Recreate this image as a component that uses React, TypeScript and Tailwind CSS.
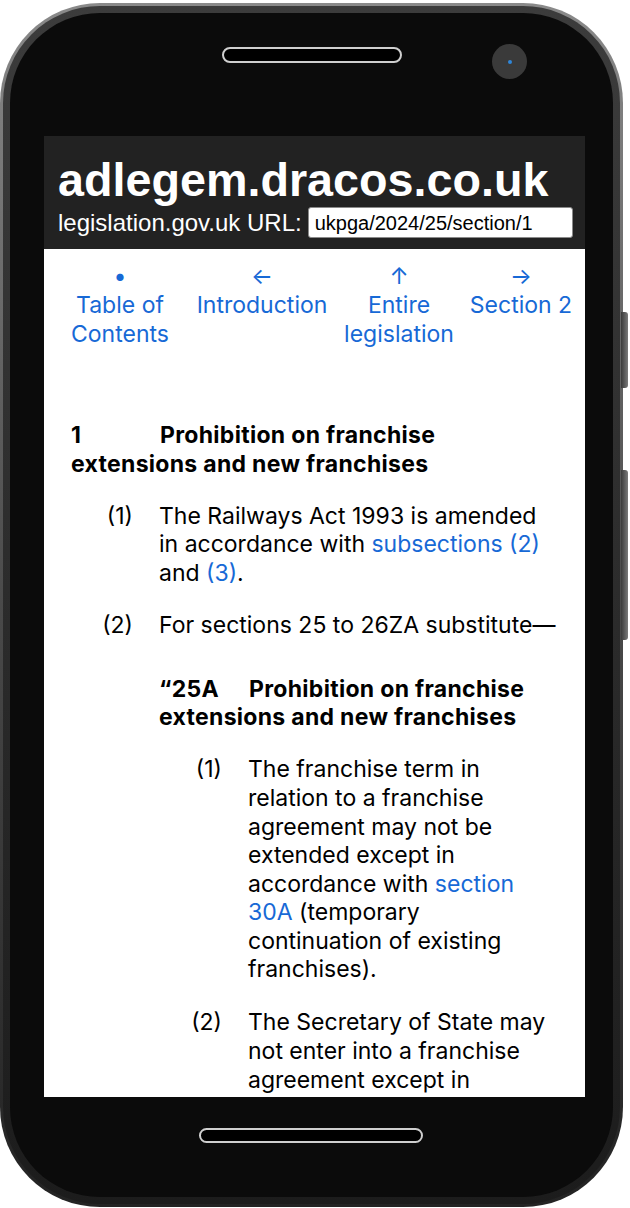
import React from "react";

const BLUE = "text-[#1769d6]";

function NavItem({ icon, lines, w }: { icon: string; lines: string[]; w: string }) {
  return (
    <div className={`${w} flex flex-col items-center text-center ${BLUE}`}>
      <span>{icon}</span>
      {lines.map((l) => (
        <span key={l} className="whitespace-nowrap">{l}</span>
      ))}
    </div>
  );
}

function Lines({ children }: { children: React.ReactNode[] }) {
  return (
    <div className="flex flex-col">
      {children.map((c, i) => (
        <span key={i} className="whitespace-nowrap">{c}</span>
      ))}
    </div>
  );
}

export default function App() {
  return (
    <div className="w-[630px] h-[1208px] bg-white overflow-hidden relative">
      {/* side buttons */}
      <div className="absolute left-[621px] top-[312px] w-[7px] h-[76px] rounded-r-[3px] bg-gradient-to-r from-[#3a3a3a] to-[#7a7a7a]" />
      <div className="absolute left-[621px] top-[470px] w-[7px] h-[170px] rounded-r-[3px] bg-gradient-to-r from-[#3a3a3a] to-[#7a7a7a]" />
      {/* phone body */}
      <div className="mt-[3px] w-[623px] h-[1204px] rounded-[100px] bg-gradient-to-b from-[#8a8a8a] via-[#4a4a4a] to-[#232323] p-[3px]">
        <div className="w-full h-full rounded-[97px] bg-gradient-to-b from-[#3c3c3c] to-[#1c1c1c] p-[7px]">
          <div className="relative w-full h-full rounded-[90px] bg-[#0b0b0b] pt-[123px] pl-[34px]">
            {/* speaker */}
            <div className="absolute left-[212px] top-[34px] w-[180px] h-[16px] rounded-full border-2 border-[#cfcfcf] bg-black" />
            {/* camera */}
            <div className="absolute left-[482px] top-[31px] w-[35px] h-[35px] rounded-full bg-[#3a3a3a] flex items-center justify-center">
              <div className="w-[4px] h-[4px] rounded-full bg-[#2f86d8]" />
            </div>
            {/* home bar */}
            <div className="absolute left-[189px] top-[1115px] w-[224px] h-[15px] rounded-full border-2 border-[#cfcfcf] bg-black" />

            {/* screen */}
            <div className="w-[541px] h-[961px] bg-white overflow-hidden">
              <div className="bg-[#222222] pt-[21px] pb-[11px] pl-[14px] text-white font-['Liberation_Sans',Arial,sans-serif]">
                <div className="text-[46.7px] leading-[46px] font-bold">adlegem.dracos.co.uk</div>
                <div className="mt-[4px] flex items-center h-[31px]">
                  <span className="text-[24px] leading-[31px]">legislation.gov.uk URL:</span>
                  <div className="ml-[6px] w-[265px] h-[31px] bg-white border border-[#8a8a8a] rounded-[3px] pl-[6px] flex items-center text-black text-[20px]">
                    ukpga/2024/25/section/1
                  </div>
                </div>
              </div>

              <div className="font-['Inter','Noto_Sans',sans-serif] text-[23px] leading-[29px] text-black">
                <div className="pt-[13px] flex">
                  <NavItem w="w-[120px] ml-[16px]" icon="•" lines={["Table of", "Contents"]} />
                  <NavItem w="w-[140px] ml-[12px]" icon="←" lines={["Introduction"]} />
                  <NavItem w="w-[120px] ml-[7px]" icon="↑" lines={["Entire", "legislation"]} />
                  <NavItem w="w-[110px] ml-[7px]" icon="→" lines={["Section 2"]} />
                </div>

                <div className="px-[27px] pt-[72px] leading-[28.6px]">
                  <div className="font-bold tracking-[0.3px]">
                    <div className="whitespace-nowrap">
                      <span className="inline-block w-[89px]">1</span>Prohibition on franchise
                    </div>
                    <div className="whitespace-nowrap">extensions and new franchises</div>
                  </div>

                  <div className="mt-[23.4px] flex">
                    <span className="w-[62px] text-right">(1)</span>
                    <div className="ml-[26px]">
                      <Lines>
                        {[
                          "The Railways Act 1993 is amended",
                          <>in accordance with <span className={BLUE}>subsections (2)</span></>,
                          <>and <span className={BLUE}>(3)</span>.</>,
                        ]}
                      </Lines>
                    </div>
                  </div>

                  <div className="mt-[23.4px] flex">
                    <span className="w-[62px] text-right">(2)</span>
                    <div className="ml-[26px]">
                      <div className="whitespace-nowrap">For sections 25 to 26ZA substitute—</div>

                      <div className="mt-[35.4px] font-bold tracking-[0.3px]">
                        <div className="whitespace-nowrap">
                          <span className="inline-block w-[90px]">“25A</span>Prohibition on franchise
                        </div>
                        <div className="whitespace-nowrap">extensions and new franchises</div>
                      </div>

                      <div className="mt-[23.4px] flex">
                        <span className="w-[63px] text-right">(1)</span>
                        <div className="ml-[26px]">
                          <Lines>
                            {[
                              "The franchise term in",
                              "relation to a franchise",
                              "agreement may not be",
                              "extended except in",
                              <>accordance with <span className={BLUE}>section</span></>,
                              <><span className={BLUE}>30A</span> (temporary</>,
                              "continuation of existing",
                              "franchises).",
                            ]}
                          </Lines>
                        </div>
                      </div>

                      <div className="mt-[24.4px] flex">
                        <span className="w-[63px] text-right">(2)</span>
                        <div className="ml-[26px]">
                          <Lines>
                            {[
                              "The Secretary of State may",
                              "not enter into a franchise",
                              "agreement except in",
                            ]}
                          </Lines>
                        </div>
                      </div>
                    </div>
                  </div>
                </div>
              </div>
            </div>
          </div>
        </div>
      </div>
    </div>
  );
}
